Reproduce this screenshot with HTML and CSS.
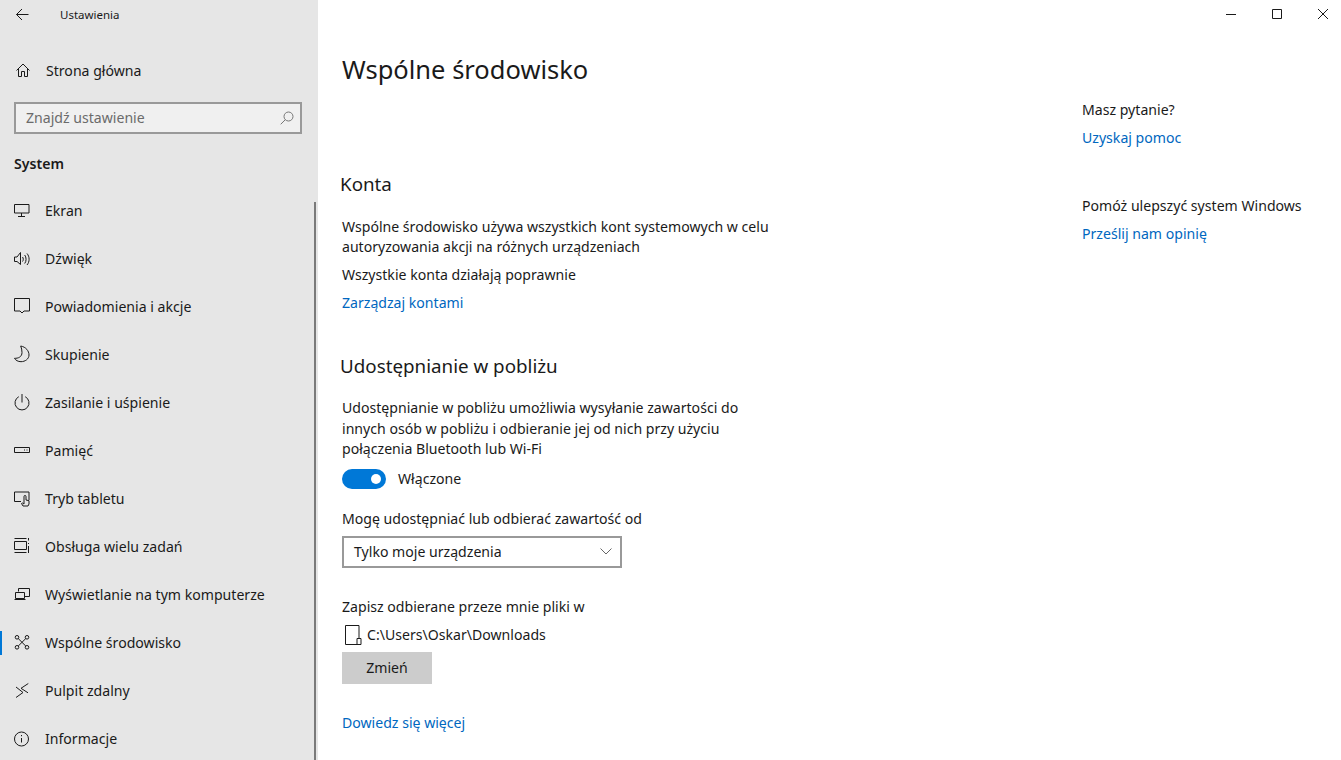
FILE: index.html
```html
<!DOCTYPE html>
<html lang="pl">
<head>
<meta charset="utf-8">
<title>Ustawienia</title>
<link rel="stylesheet" href="styles.css">
</head>
<body>
<div class="app">
  <aside class="sidebar">
    <div class="titlebar">
      <svg class="back" width="14" height="14" viewBox="0 0 14 14"><path d="M13.500 6.500H1.500M7 1 1.500 6.500 7 12"/></svg>
      <span class="apptitle">Ustawienia</span>
    </div>
    <a class="home">
      <svg class="icon" width="16" height="16" viewBox="0 0 16 16"><path d="M1.500 7.500 8 1l6.500 6.500M3.500 6v7.500h3V8.500h3v5h3V6"/></svg>
      <span>Strona główna</span>
    </a>
    <div class="search"><span>Znajdź ustawienie</span>
      <svg width="14" height="14" viewBox="0 0 14 14"><circle cx="8.500" cy="5.500" r="4.500"/><path d="M5.300 8.700 .7 13.300"/></svg>
    </div>
    <h2 class="group">System</h2>
    <nav class="nav">
      <a class="item"><svg class="icon" width="16" height="16" viewBox="0 0 16 16"><path d="M.5 1.500h14.500v8.500H.5zM7.500 10v3M4 13.500h7"/></svg><span>Ekran</span></a>
      <a class="item"><svg class="icon" width="16" height="16" viewBox="0 0 16 16"><path d="M.5 6v4.500h2.500L6.500 13.500v-12L3 6zM8.500 6c1 1 1 3.500 0 4.500M10.700 4c1.800 2 1.800 6.500 0 8.500M13 2.500c2.800 3.200 2.800 8.300 0 11.500"/></svg><span>Dźwięk</span></a>
      <a class="item"><svg class="icon" width="16" height="16" viewBox="0 0 16 16"><path d="M.5-.5h15V12h-5.500L8 14l-2-2H.5z"/></svg><span>Powiadomienia i akcje</span></a>
      <a class="item"><svg class="icon" width="16" height="16" viewBox="0 0 16 16"><path d="M6.700-1C12 0 15 4 15 8c0 4-4 6.700-8 6.700-3 0-5.500-1.500-6.500-3.400C4 11.500 8 10 8 5.500 8 3 7.500 1 6.700-1z"/></svg><span>Skupienie</span></a>
      <a class="item"><svg class="icon" width="16" height="16" viewBox="0 0 16 16"><path d="M8-1v8.500M4.800 1.700a7 7 0 1 0 6.400 0"/></svg><span>Zasilanie i uśpienie</span></a>
      <a class="item"><svg class="icon" width="16" height="16" viewBox="0 0 16 16"><path d="M.5 4.500h15v5H.5zM10 7h1M12.500 7h1"/></svg><span>Pamięć</span></a>
      <a class="item"><svg class="icon" width="16" height="16" viewBox="0 0 16 16"><path d="M7 10.500H.5V1H15v8M9 15 7.500 12.500l1-.5 1.500 1V5.500a1 1 0 0 1 2 0V9l3 .7v3.300L14 15z"/></svg><span>Tryb tabletu</span></a>
      <a class="item"><svg class="icon" width="16" height="16" viewBox="0 0 16 16"><path d="M.5-.5h12M.5 13.500h12M.5 2.500h12v8H.5zM14.500-1v2.500M14.500 4v1M14.500 7v7"/></svg><span>Obsługa wielu zadań</span></a>
      <a class="item"><svg class="icon" width="16" height="16" viewBox="0 0 16 16"><path d="M4.500 4.500v-3h11v8H11M1.500 5.500h9v6h-9zM.5 12.500h11"/></svg><span>Wyświetlanie na tym komputerze</span></a>
      <a class="item active"><svg class="icon" width="16" height="16" viewBox="0 0 16 16"><circle cx="3" cy="2.300" r="1.800"/><circle cx="13" cy="2.300" r="1.800"/><circle cx="3" cy="12.300" r="1.800"/><circle cx="13" cy="12.300" r="1.800"/><path d="M4.200 3.500l7.600 7.600M11.800 3.500l-7.600 7.600"/></svg><span>Wspólne środowisko</span></a>
      <a class="item"><svg class="icon" width="16" height="16" viewBox="0 0 16 16"><path d="M2 4 9 9.500 2 14.500M14.300.5 7 5.300l7 4.500"/></svg><span>Pulpit zdalny</span></a>
      <a class="item"><svg class="icon" width="16" height="16" viewBox="0 0 16 16"><circle cx="7.500" cy="8" r="7"/><path d="M7.500 7v4.500M7.500 4v1.200"/></svg><span>Informacje</span></a>
    </nav>
    <div class="thumb"></div>
  </aside>
  <main class="main">
    <div class="winbar">
      <svg width="12" height="12" viewBox="0 0 12 12"><path d="M1 6.500h10"/></svg>
      <svg width="12" height="12" viewBox="0 0 12 12"><path d="M1.500 1.500h9v9h-9z"/></svg>
      <svg width="12" height="12" viewBox="0 0 12 12"><path d="M1 1l10 10M11 1 1 11"/></svg>
    </div>
    <div class="columns">
      <section class="content">
        <h1 class="title">Wspólne środowisko</h1>
        <h2 class="heading first">Konta</h2>
        <p class="text intro">Wspólne środowisko używa wszystkich kont systemowych w celu<br>autoryzowania akcji na różnych urządzeniach</p>
        <p class="text gap8">Wszystkie konta działają poprawnie</p>
        <a class="link gap8">Zarządzaj kontami</a>
        <h2 class="heading second">Udostępnianie w pobliżu</h2>
        <p class="text nearby">Udostępnianie w pobliżu umożliwia wysyłanie zawartości do<br>innych osób w pobliżu i odbieranie jej od nich przy użyciu<br>połączenia Bluetooth lub Wi-Fi</p>
        <div class="toggle-row"><span class="toggle"><span class="knob"></span></span><span>Włączone</span></div>
        <p class="text label">Mogę udostępniać lub odbierać zawartość od</p>
        <div class="select"><span>Tylko moje urządzenia</span>
          <svg width="12" height="7" viewBox="0 0 12 7"><path d="M.5.500 6 6l5.500-5.500"/></svg>
        </div>
        <p class="text save">Zapisz odbierane przeze mnie pliki w</p>
        <div class="path">
          <svg width="18" height="20" viewBox="0 0 18 20"><path d="M3.500.5H17V13M3.500.5V19.500H15M15 13.500v6h4v-6z"/></svg>
          <span>C:\Users\Oskar\Downloads</span>
        </div>
        <button class="button">Zmień</button>
        <a class="link more">Dowiedz się więcej</a>
      </section>
      <aside class="help">
        <p class="text">Masz pytanie?</p>
        <a class="link gap8">Uzyskaj pomoc</a>
        <p class="text help2">Pomóż ulepszyć system Windows</p>
        <a class="link gap8">Prześlij nam opinię</a>
      </aside>
    </div>
  </main>
</div>
</body>
</html>
```
FILE: styles.css
```css
* { box-sizing: border-box; }
html, body { margin: 0; height: 100%; overflow: hidden; }
body { font-family: "Noto Sans", "Open Sans", sans-serif; font-size: 14.100px; line-height: 20px; color: #1a1a1a; background: #fff; }
svg { fill: none; stroke: #1a1a1a; stroke-width: 1; flex: none; display: block; overflow: visible; }
.app { display: flex; width: 1341px; height: 760px; }

.sidebar { position: relative; width: 318px; flex: none; background: #e6e6e6; overflow: hidden; }
.titlebar { display: flex; align-items: center; height: 30px; padding-left: 15px; }
.apptitle { margin-left: 31px; font-size: 11.500px; }
.home { display: flex; align-items: center; height: 48px; margin-top: 17px; padding-left: 15px; gap: 15px; }
.search { display: flex; align-items: center; justify-content: space-between; height: 32px; margin: 7px 16px 0 14px; padding: 0 6px 0 10px; border: 2px solid #999; background: #f0f0f0; color: #6b6b6b; }
.search svg { stroke: #777; }
.group { margin: 20px 0 0 14px; height: 20px; font-size: 14.100px; line-height: 20px; font-weight: 600; }
.nav { display: flex; flex-direction: column; margin-top: 13px; }
.item { position: relative; display: flex; align-items: center; gap: 15px; height: 48px; padding-left: 14px; }
.active::before { content: ""; position: absolute; left: 0; top: 12px; width: 2px; height: 24px; background: #0078d7; }
.thumb { position: absolute; right: 2px; top: 202px; bottom: 0; width: 2px; background: #7a7a7a; }

.main { flex: 1; display: flex; flex-direction: column; min-width: 0; }
.winbar { display: flex; justify-content: flex-end; gap: 34px; height: 30px; padding: 8px 12px 0 0; }
.columns { display: flex; }
.content { width: 764px; padding-left: 24px; flex: none; display: flex; flex-direction: column; align-items: flex-start; }
.title { margin: 18px 0 0; font-size: 25.500px; line-height: 42px; font-weight: 400; }
.heading { margin: 0 0 0 -2px; font-size: 18.800px; line-height: 26px; font-weight: 400; }
.first { margin-top: 81px; }
.second { margin-top: 40px; }
.text { margin: 0; }
.intro { margin-top: 20px; }
.nearby { margin-top: 19px; line-height: 20.500px; }
.text.gap8, .link.gap8 { margin-top: 8px; }
.link { display: block; color: #0067c0; }
.toggle-row { display: flex; align-items: center; gap: 12px; height: 20px; margin-top: 9px; }
.toggle { display: flex; align-items: center; justify-content: flex-end; width: 44px; height: 20px; padding-right: 5px; border-radius: 10px; background: #0078d7; }
.knob { width: 10px; height: 10px; border-radius: 50%; background: #fff; }
.text.label { margin-top: 20px; }
.select { display: flex; align-items: center; justify-content: space-between; width: 280px; height: 32px; margin-top: 7px; padding: 0 8px 0 10px; border: 2px solid #999; }
.select svg { stroke: #666; }
.text.save { margin-top: 29px; }
.path { display: flex; align-items: center; gap: 7px; height: 20px; margin-top: 8px; }
.button { width: 90px; height: 32px; margin-top: 7px; padding: 0; border: 0; background: #ccc; color: inherit; font: inherit; }
.link.more { margin-top: 29px; }

.help { padding-top: 70px; width: 235px; flex: none; }
.text.help2 { margin-top: 48px; }
```
